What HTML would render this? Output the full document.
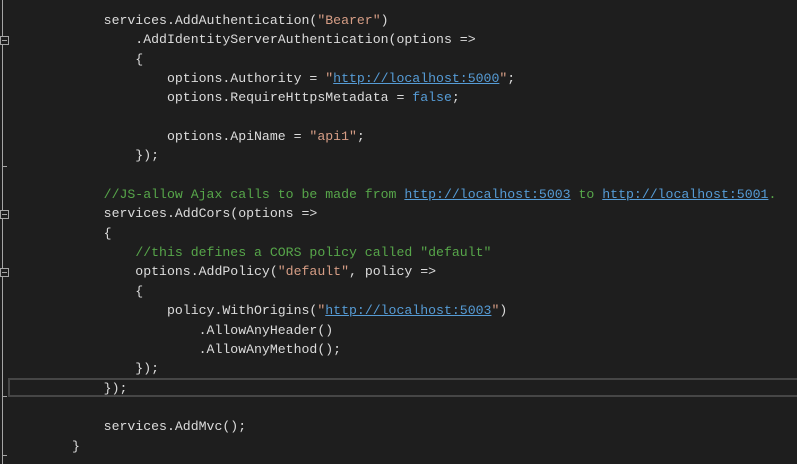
<!DOCTYPE html>
<html><head><style>
html,body{margin:0;padding:0;background:#1e1e1e;width:797px;height:464px;overflow:hidden}
pre{position:absolute;left:72px;top:11px;margin:0;font-family:"Liberation Mono",monospace;font-size:13.2px;line-height:19.35px;color:#dcdcdc}
.s{color:#d69d85}.u{color:#569cd6;text-decoration:underline}.c{color:#57a64a}.k{color:#569cd6}
.g{position:absolute;left:2px;width:1px;background:#a5a5a5}
.b{position:absolute;left:0;width:7px;height:7px;border:1px solid #a5a5a5;background:#1e1e1e}
.b:after{content:"";position:absolute;left:1px;top:3px;width:5px;height:1px;background:#a5a5a5}
.t{position:absolute;left:2px;width:5px;height:1px;background:#a5a5a5}
.hl{position:absolute;left:8px;top:378px;width:800px;height:19px;border:2px solid #464646;box-sizing:border-box}
</style></head><body>
<div class="g" style="top:0;height:464px"></div>
<div class="b" style="top:36px"></div>
<div class="b" style="top:210px"></div>
<div class="b" style="top:268px"></div>
<div class="t" style="top:166px"></div>
<div class="t" style="top:396px"></div>
<div class="t" style="top:455px"></div>
<div class="hl"></div>
<pre>    services.AddAuthentication(<span class="s">"Bearer"</span>)
        .AddIdentityServerAuthentication(options =&gt;
        {
            options.Authority = <span class="s">"</span><span class="u">http://localhost:5000</span><span class="s">"</span>;
            options.RequireHttpsMetadata = <span class="k">false</span>;

            options.ApiName = <span class="s">"api1"</span>;
        });

    <span class="c">//JS-allow Ajax calls to be made from <span class="u">http://localhost:5003</span> to <span class="u">http://localhost:5001</span>.</span>
    services.AddCors(options =&gt;
    {
        <span class="c">//this defines a CORS policy called "default"</span>
        options.AddPolicy(<span class="s">"default"</span>, policy =&gt;
        {
            policy.WithOrigins(<span class="s">"</span><span class="u">http://localhost:5003</span><span class="s">"</span>)
                .AllowAnyHeader()
                .AllowAnyMethod();
        });
    });

    services.AddMvc();
}</pre>
</body></html>
